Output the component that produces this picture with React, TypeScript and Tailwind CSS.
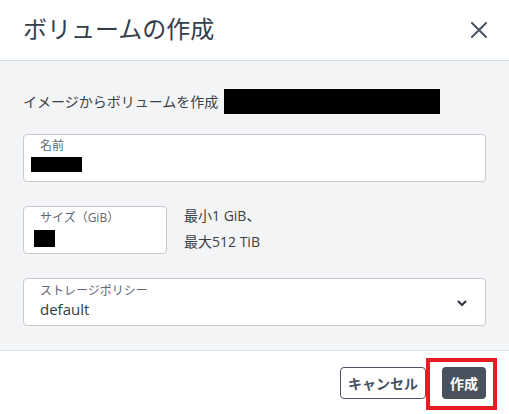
const FONT = { fontFamily: '"Open Sans", "Noto Sans CJK JP", sans-serif' }

function Redacted({ className }: { className: string }) {
  return <span className={`inline-block bg-black ${className}`} />
}

export default function App() {
  return (
    <div className="w-[509px] h-[414px] bg-white text-[#333] overflow-hidden" style={FONT}>
      {/* header */}
      <div className="h-[61px] flex items-center justify-between pl-[23px] pr-[22px] border-b border-[#d5dfe9]">
        <h2 className="text-[24px] leading-none text-[#343e4b] pb-[2px]">ボリュームの作成</h2>
        <svg width="16" height="16" viewBox="0 0 16 16" className="text-[#4b5563]">
          <path d="M1 1 L15 15 M15 1 L1 15" stroke="currentColor" strokeWidth="2" strokeLinecap="square" fill="none" />
        </svg>
      </div>

      {/* body */}
      <div className="bg-[#f3f4f6] px-[23px] pt-[28px] pb-[24px] border-b border-[#dde2e8]">
        <div className="flex items-center h-[25px] text-[14px] text-[#3a3f45]">
          <span>イメージからボリュームを作成</span>
          <Redacted className="ml-[6px] w-[216px] h-[25px]" />
        </div>

        <div className="mt-[20px] h-[48px] rounded-[4px] border border-[#c6cacf] bg-white pt-[3px]">
          <div className="pl-[16px] text-[12px] leading-[16px] text-[#5f6670]">名前</div>
          <Redacted className="ml-[7px] mt-[3px] w-[51px] h-[15px] align-top" />
        </div>

        <div className="mt-[24px] h-[48px] flex items-start gap-[17px]">
          <div className="w-[144px] h-[48px] rounded-[4px] border border-[#c6cacf] bg-white pt-[3px]">
            <div className="pl-[16px] text-[12px] leading-[16px] text-[#5f6670]">サイズ（GiB）</div>
            <Redacted className="ml-[10px] mt-[4px] w-[21px] h-[17px] align-top" />
          </div>
          <div className="-mt-[3px] text-[14px] leading-[26px] text-[#3a3f45]">
            <div>最小1 GiB、</div>
            <div>最大512 TiB</div>
          </div>
        </div>

        <div className="mt-[24px] h-[48px] rounded-[4px] border border-[#c6cacf] bg-white flex items-center justify-between pl-[16px] pr-[17px]">
          <div>
            <div className="text-[12px] leading-[16px] text-[#5f6670]">ストレージポリシー</div>
            <div className="text-[15px] leading-[20px] text-[#333b45] pb-[2px]">default</div>
          </div>
          <svg width="12" height="8" viewBox="0 0 12 8" className="text-[#333b45] mt-[2px]">
            <path d="M2 2 L6 6 L10 2" stroke="currentColor" strokeWidth="2.2" fill="none" />
          </svg>
        </div>
      </div>

      {/* footer */}
      <div className="flex justify-end items-center gap-[16px] pr-[23px] pt-[16px]">
        <button className="h-[32px] px-[7px] rounded-[4px] border border-[#4b5563] bg-white text-[14px] font-bold text-[#48525e]">
          キャンセル
        </button>
        <div className="relative">
          <button className="h-[32px] w-[44px] rounded-[4px] bg-[#48525e] text-[14px] font-bold text-white">
            作成
          </button>
          <div className="absolute left-[-16px] right-[-11px] top-[-9px] bottom-[-11px] border-[4px] border-[#e81c24] pointer-events-none" />
        </div>
      </div>
    </div>
  )
}
